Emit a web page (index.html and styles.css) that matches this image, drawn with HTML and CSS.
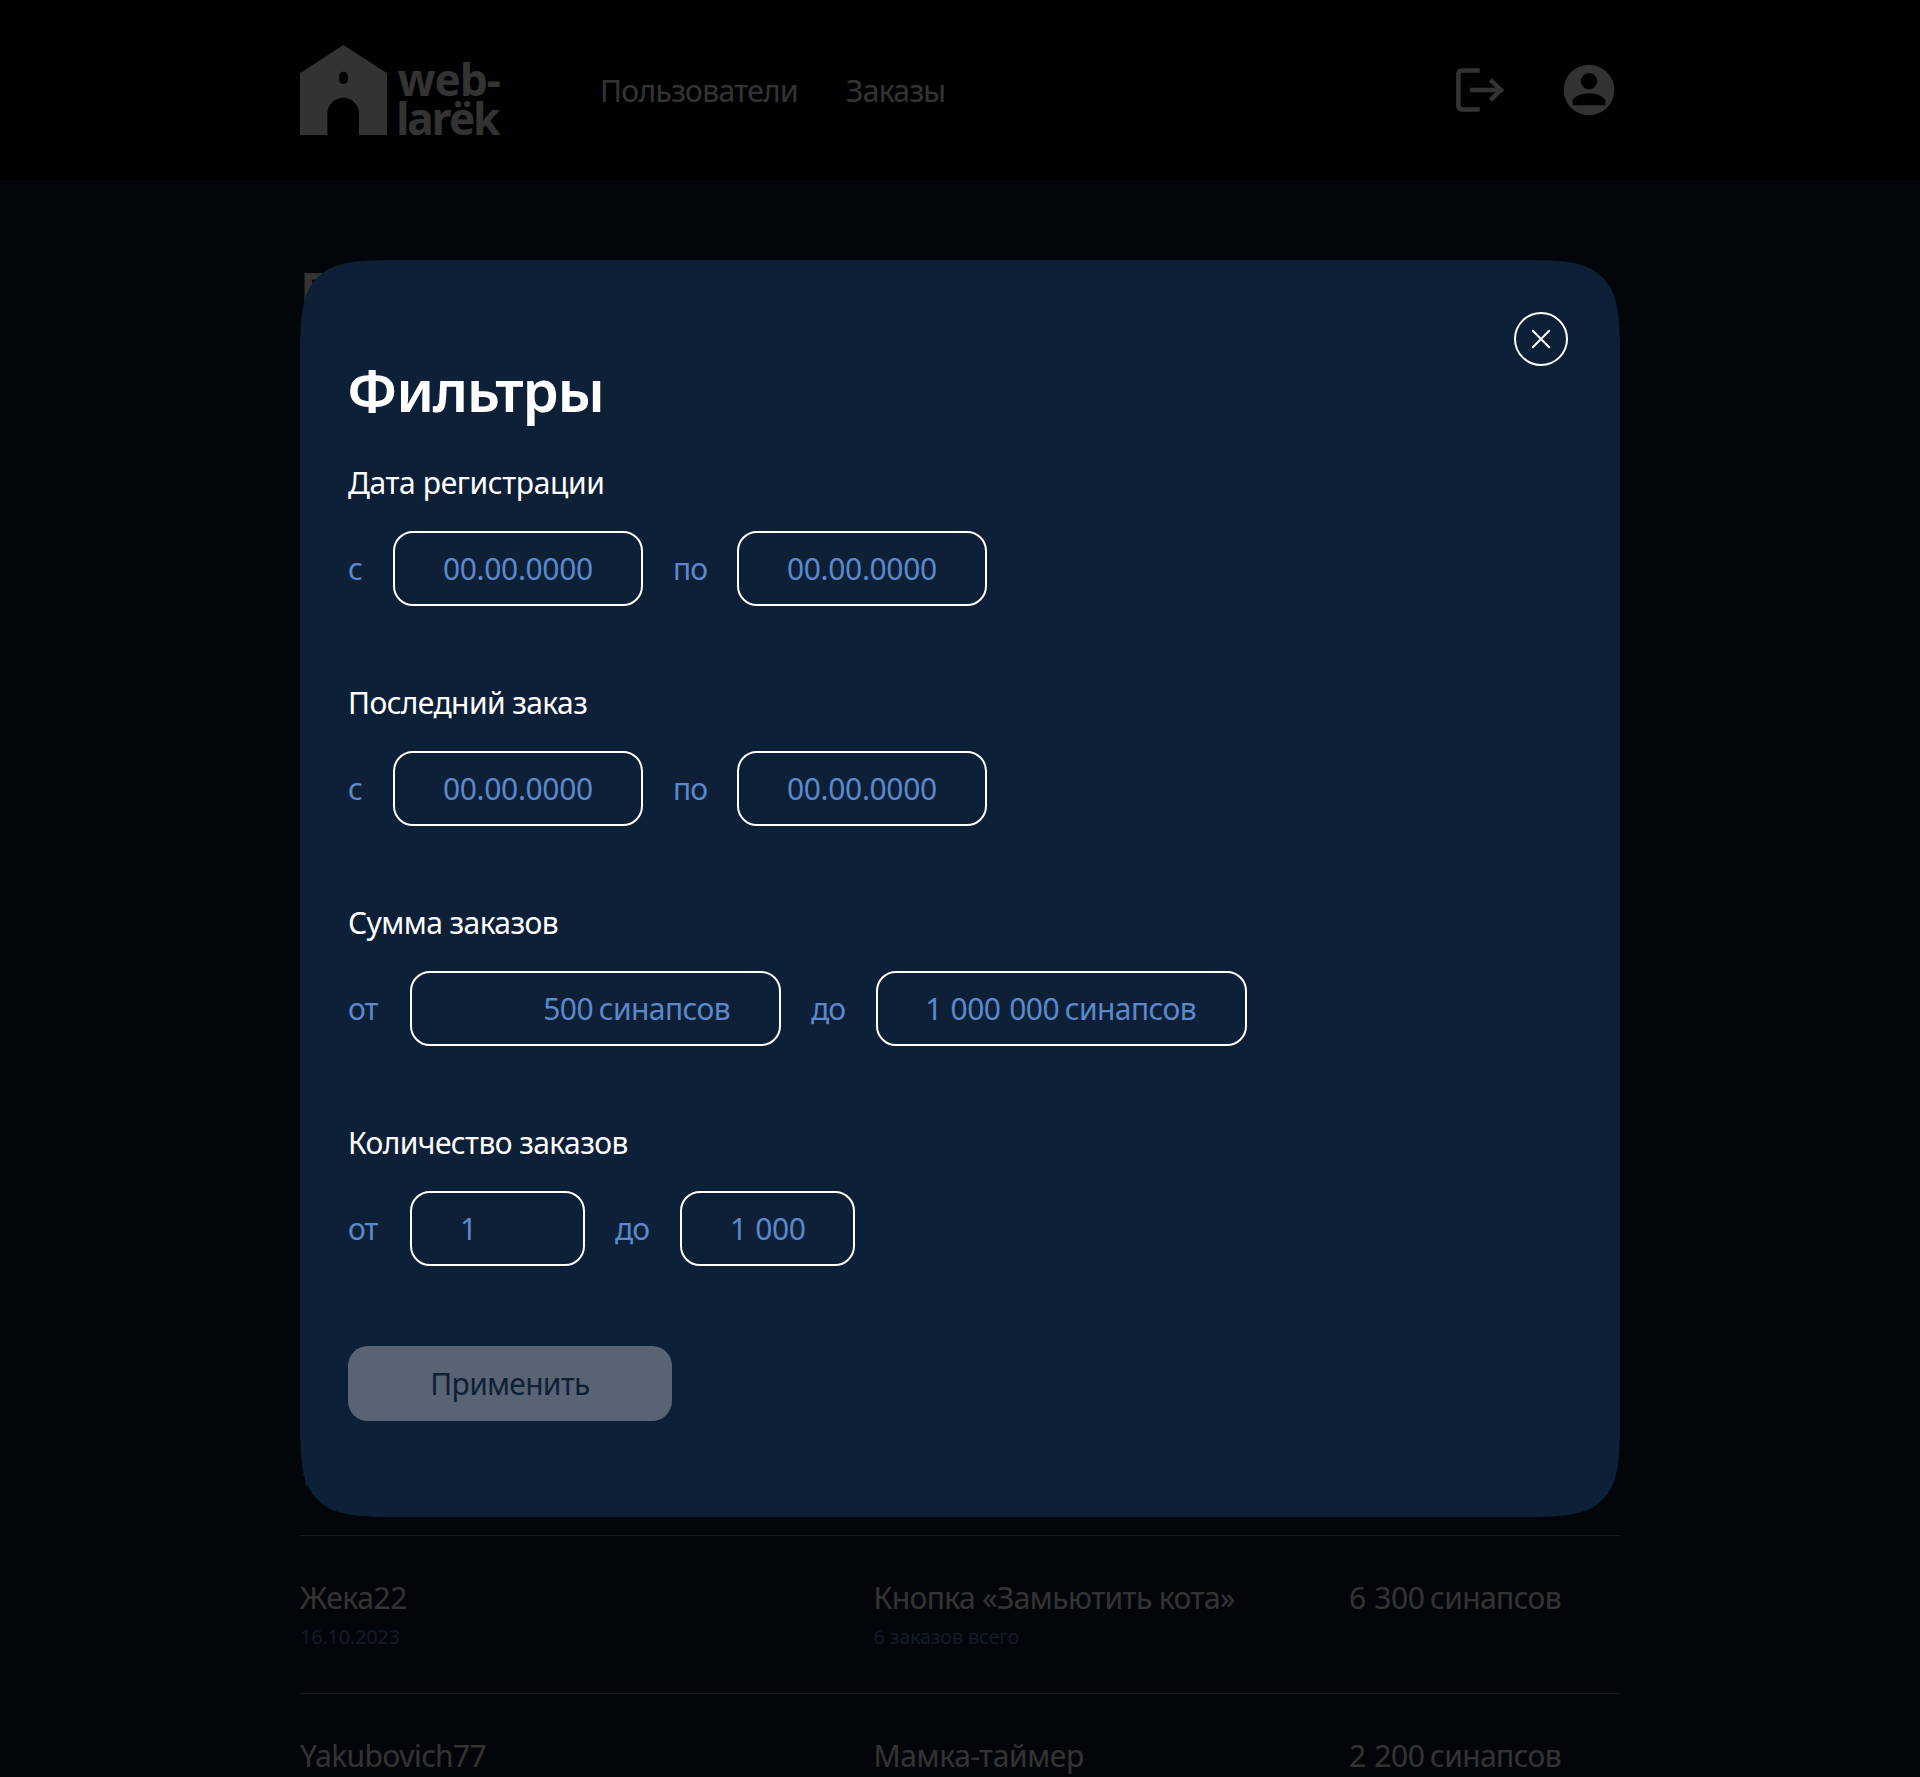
FILE: index.html
```html
<!DOCTYPE html>
<html lang="ru">
<head>
<meta charset="utf-8">
<title>web-larёk</title>
<link rel="stylesheet" href="styles.css">
</head>
<body>
<header class="header">
  <div class="container header-inner">
    <svg class="logo" width="204" height="92" viewBox="0 0 204 92" fill="#fff">
      <path fill-rule="evenodd" d="M0 28.3 43.4 0 87 28.3V90H59V68.6a15.8 15.8 0 0 0-31.6 0V90H0ZM39.1 31.2v3.4a4.4 4.4 0 0 0 8.8 0v-3.4a4.4 4.4 0 0 0-8.8 0Z"/>
      <text class="logo-text logo-text-top" x="97.8" y="50.8">web-</text>
      <text class="logo-text logo-text-bottom" x="96.2" y="89.6">larёk</text>
    </svg>
    <nav class="nav">
      <a class="nav-link">Пользователи</a>
      <a class="nav-link">Заказы</a>
    </nav>
    <div class="actions">
      <svg width="50" height="54" viewBox="0 0 50 54" fill="none" stroke="#fff">
        <path stroke-width="4.6" d="M25.8 7.5H8.4Q4.4 7.5 4.4 11.5V42.5Q4.4 46.5 8.4 46.5H25.8"/>
        <path stroke-width="4.4" d="M16 27H45M36.4 16.8 47 27 36.4 37.2"/>
      </svg>
      <svg width="52" height="52" viewBox="0 0 52 52" fill="#fff">
        <path fill-rule="evenodd" d="M26 .7a25.3 25.3 0 1 0 0 50.6 25.3 25.3 0 0 0 0-50.6ZM26 9a8.2 8.2 0 1 1 0 16.4A8.2 8.2 0 0 1 26 9ZM9.6 41.2V36.6C10 33.4 17 29.2 26 29.2S42 33.4 42.4 36.6V41.2Z"/>
      </svg>
    </div>
  </div>
</header>

<main class="container page">
  <h1 class="page-title">П</h1>
  <div class="orders">
    <div class="row row-first">
      <div><p class="name">&nbsp;</p><p class="note">1</p></div>
    </div>
    <div class="row">
      <div><p class="name name-wide">Жека22</p><p class="note">16.10.2023</p></div>
      <div class="product"><p class="name">Кнопка «Замьютить кота»</p><p class="note">6 заказов всего</p></div>
      <div><p class="name money"><span class="num">6 300</span> синапсов</p></div>
    </div>
    <div class="row">
      <div><p class="name">Yakubovich77</p></div>
      <div class="product"><p class="name name-wide">Мамка-таймер</p></div>
      <div><p class="name money"><span class="num">2 200</span> синапсов</p></div>
    </div>
  </div>
</main>

<div class="overlay">
  <section class="modal">
    <button class="close" aria-label="Закрыть">
      <svg width="55" height="55" viewBox="0 0 55 55" fill="none" stroke="#fff" stroke-width="2" stroke-linecap="round">
        <circle cx="27" cy="27" r="26"/>
        <path d="m18.8 18.8 16.4 16.4M35.2 18.8 18.8 35.2"/>
      </svg>
    </button>
    <h2 class="title">Фильтры</h2>
    <form class="filters">
      <div class="group">
        <p class="label label-wide">Дата регистрации</p>
        <div class="range range-date">
          <span class="word">с</span><span class="field">00.00.0000</span>
          <span class="word">по</span><span class="field">00.00.0000</span>
        </div>
      </div>
      <div class="group">
        <p class="label">Последний заказ</p>
        <div class="range range-date">
          <span class="word">с</span><span class="field">00.00.0000</span>
          <span class="word">по</span><span class="field">00.00.0000</span>
        </div>
      </div>
      <div class="group">
        <p class="label">Сумма заказов</p>
        <div class="range range-sum">
          <span class="word">от</span><span class="field money"><span class="num">500</span> синапсов</span>
          <span class="word">до</span><span class="field money"><span class="num">1 000 000</span> синапсов</span>
        </div>
      </div>
      <div class="group">
        <p class="label">Количество заказов</p>
        <div class="range range-count">
          <span class="word">от</span><span class="field"><span class="num">1</span></span>
          <span class="word">до</span><span class="field"><span class="num">1 000</span></span>
        </div>
      </div>
      <button class="apply" type="button" disabled>Применить</button>
    </form>
  </section>
</div>
</body>
</html>
```
FILE: styles.css
```css
* { box-sizing: border-box; }

html, body { height: 100%; }

body {
  margin: 0;
  overflow: hidden;
  background: #0c1a32;
  color: #fff;
  font: 30px/40px "Noto Sans", sans-serif;
  letter-spacing: -0.59px;
}

h1, h2, p { margin: 0; }

.container { width: 1320px; margin: 0 auto; }

/* Amounts: even digit groups, tight gap before the unit */
.money { word-spacing: -1.6px; }
.num { letter-spacing: -0.5px; word-spacing: 1.4px; }

/* Header */
.header { height: 180px; background: #02050b; }
.header-inner { display: flex; align-items: center; height: 100%; }
.logo { display: block; margin-top: 2px; overflow: visible; }
.logo-text { font-size: 44px; font-weight: 700; }
.logo-text-top { letter-spacing: -0.9px; }
.logo-text-bottom { letter-spacing: -2px; }
.nav { display: flex; gap: 48px; margin-left: 96px; padding-top: 1px; }
.nav-link { letter-spacing: -0.66px; }
.actions { display: flex; align-items: center; gap: 59px; margin: 0 5px 0 auto; }
.actions svg { display: block; }

/* Orders list behind the dialog */
.page-title {
  height: 84px;
  margin: 71px 0 0 -1px;
  font-size: 60px;
  font-weight: 600;
  line-height: 84px;
}
.row {
  display: grid;
  grid-template-columns: 572px 477px 1fr;
  height: 158px;
  padding-top: 42px;
  border-bottom: 1px solid rgba(255, 255, 255, 0.45);
}
.row-first { margin-top: 1043px; }
.product { padding-left: 1.5px; }
.name-wide { letter-spacing: -0.4px; }
.note {
  margin-top: 5px;
  color: #5a87c9;
  font-size: 20px;
  line-height: 28px;
  letter-spacing: -0.25px;
}

/* Dialog */
.overlay {
  position: fixed;
  inset: 0;
  padding-top: 260px;
  background: rgba(0, 0, 0, 0.8);
}
.modal {
  position: relative;
  width: 1320px;
  height: 1257px;
  margin: 0 auto;
  padding: 90px 48px 0;
  background: #0e2037;
  clip-path: path("M0 114C0 63.24 0 37.86 14.37 21.03A60 60 0 0 1 21.03 14.37C37.86 0 63.24 0 114 0H1206C1256.76 0 1282.14 0 1298.97 14.37A60 60 0 0 1 1305.63 21.03C1320 37.86 1320 63.24 1320 114V1143C1320 1193.76 1320 1219.14 1305.63 1235.97A60 60 0 0 1 1298.97 1242.63C1282.14 1257 1256.76 1257 1206 1257H114C63.24 1257 37.86 1257 21.03 1242.63A60 60 0 0 1 14.37 1235.97C0 1219.14 0 1193.76 0 1143Z");
}
.close {
  position: absolute;
  top: 52px;
  right: 51px;
  padding: 0;
  border: 0;
  background: none;
}
.close svg { display: block; }
.title {
  margin: 0 0 33px -1px;
  font-size: 58px;
  font-weight: 600;
  line-height: 80px;
  letter-spacing: -1.3px;
}
.group { height: 220px; }
.label-wide { letter-spacing: -0.38px; }
.range {
  display: grid;
  align-items: center;
  gap: 30px;
  margin-top: 28px;
  color: #5c88cc;
}
.range-date { grid-template-columns: 15px 250px 34px 250px; }
.range-sum { grid-template-columns: 32px 371px 35px 371px; }
.range-count { grid-template-columns: 32px 175px 35px 175px; }
.word { padding-top: 1px; white-space: nowrap; letter-spacing: -1px; }
.field {
  height: 75px;
  padding: 16px 50px 0 48px;
  border: 2px solid #fff;
  border-radius: 20px;
  white-space: nowrap;
}
.range-date .field { text-align: center; letter-spacing: -0.36px; }
.range-sum .field { padding: 16px 49px 0 40px; text-align: right; }
.apply {
  display: block;
  width: 324px;
  height: 75px;
  margin-top: 3px;
  padding: 0;
  border: 0;
  border-radius: 20px;
  background: #586473;
  color: #0e2037;
  font: inherit;
  letter-spacing: -0.72px;
}
```
